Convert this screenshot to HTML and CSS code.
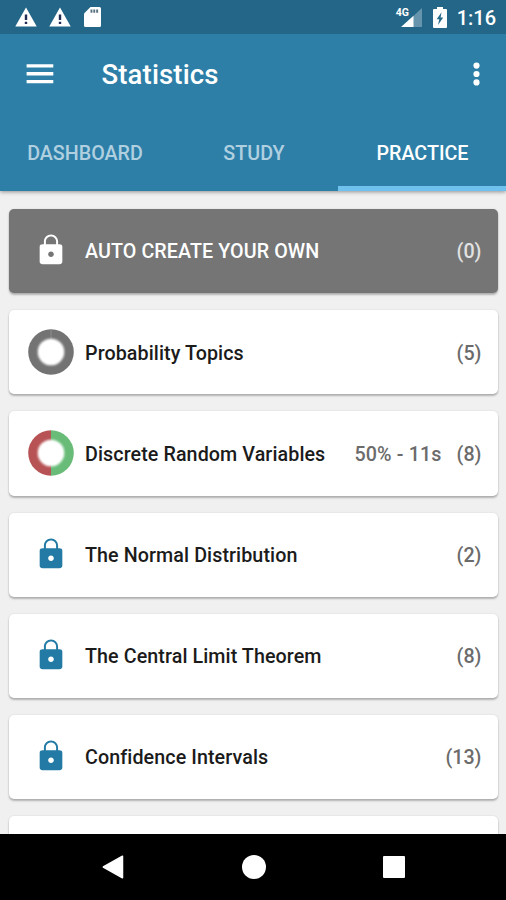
FILE: index.html
```html
<!DOCTYPE html>
<html lang="en">
<head>
<meta charset="utf-8">
<title>Statistics</title>
<link rel="stylesheet" href="styles.css">
</head>
<body>
<svg class="defs" aria-hidden="true">
  <symbol id="lock" viewBox="0 0 24 24"><path fill="currentColor" d="M18 8h-1V6c0-2.760-2.240-5-5-5S7 3.240 7 6v2H6c-1.100 0-2 .6-2 1.700v10.600c0 1.100.9 1.700 2 1.700h12c1.100 0 2-.6 2-1.700V9.700c0-1.100-.9-1.700-2-1.700zm-6 9c-1.100 0-2-.9-2-2s.9-2 2-2 2 .9 2 2-.9 2-2 2zm3.600-9H8.400V6c0-1.990 1.610-3.600 3.600-3.600s3.600 1.610 3.600 3.600v2z"/></symbol>
  <symbol id="warning" viewBox="0 0 22 20"><path fill="#fff" d="M11 .5 21.700 19.500H.3z"/><path fill="#222c55" d="M9.800 7.400h2.400v5.600H9.800zM9.800 14.800h2.400v2.300H9.800z"/></symbol>
  <filter id="soft"><feGaussianBlur stdDeviation="0.9"/></filter>
</svg>
<div class="screen">
  <header class="header">
    <div class="status">
      <div class="status-left">
        <svg width="22" height="20"><use href="#warning"/></svg>
        <svg width="22" height="20"><use href="#warning"/></svg>
        <svg class="sd" width="17" height="20" viewBox="0 0 17 20"><path fill="#fff" d="M6.500 0H15.500a1.500 1.500 0 0 1 1.500 1.500V18.500a1.500 1.500 0 0 1-1.500 1.500H1.500A1.500 1.500 0 0 1 0 18.500V6.500z"/><path fill="#59717f" d="M6.500 2.500h1.900v3.200H6.500zM9.300 2.500h1.900v3.200H9.300zM12.200 2.500h1.900v3.200h-1.900z"/></svg>
      </div>
      <div class="status-right">
        <div class="signal">
          <svg width="21" height="19" viewBox="0 0 21 19"><path fill="#6594ac" d="M21 0V19H12V8.200z"/><path fill="#fff" d="M0 19 12.500 7.800V19z"/></svg>
          <span class="network">4G</span>
        </div>
        <svg class="battery" width="14" height="21" viewBox="0 0 14 21"><path fill="#fff" d="M4 0h6v2h3a1 1 0 0 1 1 1v17a1 1 0 0 1-1 1H1a1 1 0 0 1-1-1V3a1 1 0 0 1 1-1h3z"/><path fill="#236889" d="M8.500 5.200 3.700 12.300h2.600L5 18l5.200-7.500H7.600z"/></svg>
        <span class="clock">1:16</span>
      </div>
    </div>
    <div class="appbar">
      <svg class="menu" width="28" height="20" viewBox="0 0 28 20"><path fill="#fff" d="M.6 .3h26.700v3.300H.6zM.6 8.100h26.700v3.300H.6zM.6 15.900h26.700v3.300H.6z"/></svg>
      <h1 class="title">Statistics</h1>
      <svg class="more" width="7" height="24" viewBox="0 0 7 24"><g fill="#fff"><circle cx="3.500" cy="3.600" r="3.100"/><circle cx="3.500" cy="12" r="3.100"/><circle cx="3.500" cy="20.400" r="3.100"/></g></svg>
    </div>
    <nav class="tabs">
      <div class="tab">DASHBOARD</div>
      <div class="tab">STUDY</div>
      <div class="tab active">PRACTICE</div>
    </nav>
  </header>
  <main class="list">
    <div class="card dark">
      <div class="icon"><svg class="lock"><use href="#lock"/></svg></div>
      <span class="name">AUTO CREATE YOUR OWN</span><span class="count">(0)</span>
    </div>
    <div class="card">
      <div class="icon"><svg width="46" height="46" viewBox="0 0 46 46"><circle cx="23" cy="23" r="22.800" fill="#737373"/><path stroke="#999" stroke-width=".7" d="M23 0V12"/><circle cx="23" cy="23" r="13.300" fill="#fff" filter="url(#soft)"/></svg></div>
      <span class="name">Probability Topics</span><span class="count">(5)</span>
    </div>
    <div class="card">
      <div class="icon"><svg width="46" height="46" viewBox="0 0 46 46"><path fill="#b75355" d="M23 .2a22.800 22.800 0 0 0 0 45.600z"/><path fill="#68bc78" d="M23 .2a22.800 22.800 0 0 1 0 45.600z"/><circle cx="23" cy="23" r="13.300" fill="#fff" filter="url(#soft)"/></svg></div>
      <span class="name">Discrete Random Variables</span><span class="score">50% - 11s</span><span class="count">(8)</span>
    </div>
    <div class="card">
      <div class="icon"><svg class="lock"><use href="#lock"/></svg></div>
      <span class="name">The Normal Distribution</span><span class="count">(2)</span>
    </div>
    <div class="card">
      <div class="icon"><svg class="lock"><use href="#lock"/></svg></div>
      <span class="name">The Central Limit Theorem</span><span class="count">(8)</span>
    </div>
    <div class="card">
      <div class="icon"><svg class="lock"><use href="#lock"/></svg></div>
      <span class="name">Confidence Intervals</span><span class="count">(13)</span>
    </div>
    <div class="card"></div>
  </main>
  <footer class="navbar">
    <svg width="22" height="24" viewBox="0 0 22 24"><path fill="#fff" stroke="#fff" stroke-width="1.500" stroke-linejoin="round" d="M1.300 12 20.500 1.200V22.800z"/></svg>
    <svg width="24" height="24" viewBox="0 0 24 24"><circle cx="12" cy="12" r="12" fill="#fff"/></svg>
    <svg width="22" height="22" viewBox="0 0 22 22"><rect width="22" height="22" rx="1" fill="#fff"/></svg>
  </footer>
</div>
</body>
</html>
```

FILE: styles.css
```css
* { box-sizing: border-box; }
body { margin: 0; font-family: Roboto, "Liberation Sans", sans-serif; background: #f0f0f0; }
.defs { position: absolute; width: 0; height: 0; }
.screen { width: 506px; height: 900px; display: flex; flex-direction: column; overflow: hidden; }

.header { position: relative; z-index: 1; flex: none; height: 191px; background: #2d7fa8; color: #fff; box-shadow: 0 1px 4px rgba(0,0,0,.4); display: flex; flex-direction: column; }
.status { height: 34px; background: #236687; display: flex; justify-content: space-between; padding: 0 10px 0 14.500px; }
.status-left, .status-right { display: flex; align-items: center; }
.status-left { gap: 12px; }
.sd { margin-left: 1px; }
.status-right { padding-top: 1px; }
.signal { position: relative; height: 19px; margin-right: 11px; }
.signal svg { display: block; }
.network { position: absolute; left: -5px; top: -1px; font-size: 10.500px; line-height: 12px; font-weight: 700; }
.battery { margin-right: 10px; }
.clock { font-size: 20px; font-weight: 500; line-height: 24px; }

.appbar { height: 81px; display: flex; align-items: center; padding: 0 26px; }
.menu { margin-bottom: 2px; }
.title { margin: 1px auto 0 47.500px; font-size: 27.500px; font-weight: 500; line-height: 32px; letter-spacing: .15px; }
.more { margin: 0 .5px 2px 0; }

.tabs { flex: 1; display: grid; grid-template-columns: 169px 169px 168px; }
.tab { display: flex; justify-content: center; align-items: center; font-size: 19.700px; font-weight: 500; color: #b0d0e0; border-bottom: 5px solid transparent; padding: 6px 0 0 1px; }
.tab.active { color: #fff; border-color: #6fc2ed; }

.list { flex: none; height: 643px; padding: 18px 8.500px 0 9px; overflow: hidden; display: flex; flex-direction: column; gap: 17px; }
.card { flex: none; height: 84.200px; border-radius: 5px; background: #fff; box-shadow: 0 2px 2px rgba(0,0,0,.25), 0 0 2px rgba(0,0,0,.12); display: flex; align-items: center; padding: 0 16px 0 19px; font-size: 19.700px; color: #6b6b6b; }
.icon { flex: none; width: 46px; height: 46px; margin-right: 11px; display: flex; align-items: center; justify-content: center; color: #237ba5; }
.lock { width: 34px; height: 34px; margin-bottom: 1.500px; }
.name, .score, .count { padding-top: 1.500px; font-weight: 500; white-space: nowrap; }
.name { flex: 1; color: #1b1b1b; letter-spacing: .09px; }
.score { margin-right: 15px; letter-spacing: .15px; }
.card.dark { background: #757575; color: #e2e2e2; }
.dark .icon, .dark .name { color: #fff; }

.navbar { flex: none; height: 66px; background: #000; display: flex; align-items: center; justify-content: space-between; padding: 0 101px 0 102px; }
```
